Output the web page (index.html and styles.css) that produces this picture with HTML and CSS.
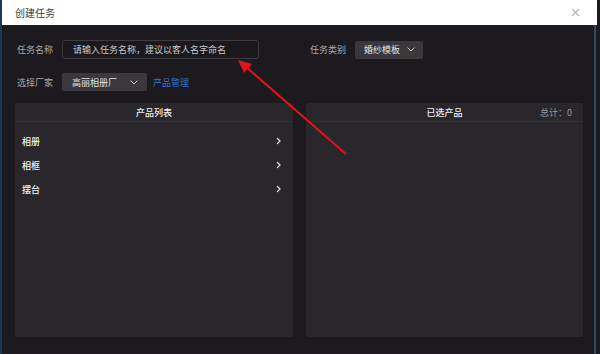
FILE: index.html
```html
<!DOCTYPE html>
<html lang="zh">
<head>
<meta charset="utf-8">
<title>创建任务</title>
<link rel="stylesheet" href="styles.css">
</head>
<body>
<div class="window">
  <div class="titlebar">
    <span class="title">创建任务</span>
    <svg class="close" width="9" height="9" viewBox="0 0 9 9"><path d="M1 1L8 8M8 1L1 8" stroke="#b4b4b4" stroke-width="1.1" fill="none"/></svg>
  </div>
  <div class="content">
    <div class="row">
      <span class="label">任务名称</span>
      <div class="input">请输入任务名称，建议以客人名字命名</div>
      <span class="label label-cat">任务类别</span>
      <div class="select select-cat">婚纱模板<svg class="caret" width="8" height="5" viewBox="0 0 8 5"><path d="M0.5 0.5L4 4L7.5 0.5" stroke="#c8c8c8" stroke-width="1" fill="none"/></svg></div>
    </div>
    <div class="row row2">
      <span class="label">选择厂家</span>
      <div class="select select-fac">高丽相册厂<svg class="caret" width="8" height="5" viewBox="0 0 8 5"><path d="M0.5 0.5L4 4L7.5 0.5" stroke="#c8c8c8" stroke-width="1" fill="none"/></svg></div>
      <a class="link">产品管理</a>
    </div>
    <div class="panels">
      <div class="panel panel-left">
        <div class="panel-head">产品列表</div>
        <ul class="list">
          <li class="item"><span>相册</span><svg width="5" height="8" viewBox="0 0 5 8"><path d="M1 1L4 4L1 7" stroke="#e0e0e0" stroke-width="1.2" fill="none"/></svg></li>
          <li class="item"><span>相框</span><svg width="5" height="8" viewBox="0 0 5 8"><path d="M1 1L4 4L1 7" stroke="#e0e0e0" stroke-width="1.2" fill="none"/></svg></li>
          <li class="item"><span>摆台</span><svg width="5" height="8" viewBox="0 0 5 8"><path d="M1 1L4 4L1 7" stroke="#e0e0e0" stroke-width="1.2" fill="none"/></svg></li>
        </ul>
      </div>
      <div class="panel panel-right">
        <div class="panel-head">已选产品<span class="total">总计：0</span></div>
      </div>
    </div>
  </div>
  <svg class="arrow" width="600" height="354" viewBox="0 0 600 354">
    <line x1="346" y1="154" x2="245" y2="66" stroke="#e3131b" stroke-width="2"/>
    <polygon points="238,60 252,64 244,73" fill="#e3131b"/>
  </svg>
</div>
</body>
</html>
```
FILE: styles.css
```css
* { box-sizing: border-box; }
html, body { margin: 0; padding: 0; }
body {
  width: 600px;
  height: 354px;
  overflow: hidden;
  background: #1b191d;
  font-family: "Noto Sans CJK SC", "Noto Sans", sans-serif;
}
.window {
  position: relative;
  width: 600px;
  height: 354px;
  background: #1c1a1e;
  border-left: 2px solid #1f3550;
  display: flex;
  flex-direction: column;
}
.window::after {
  content: "";
  position: absolute;
  right: 4px;
  top: 25px;
  bottom: 0;
  width: 2px;
  background: #2a4a6c;
}
.titlebar {
  height: 25px;
  background: #ffffff;
  margin-right: 3px;
  display: flex;
  align-items: center;
  justify-content: space-between;
  padding: 0 17px 0 13px;
  font-size: 10px;
  color: #3a3a3a;
}
.content {
  padding: 15px 17px 0 13px;
  display: flex;
  flex-direction: column;
}
.row {
  display: flex;
  align-items: center;
  height: 19px;
  padding-left: 2px;
}
.row2 { margin-top: 14px; height: 18px; }
.label {
  font-size: 9px;
  color: #a9a9ab;
  margin-right: 9px;
  white-space: nowrap;
}
.label-cat { margin-left: 51px; }
.input {
  width: 197px;
  height: 19px;
  border: 1px solid #3d3b40;
  border-radius: 3px;
  background: #1a181c;
  color: #c9c9cb;
  font-size: 9px;
  display: flex;
  align-items: center;
  padding-left: 10px;
  white-space: nowrap;
}
.select {
  height: 18px;
  background: #3a383d;
  border-radius: 2px;
  color: #e2e2e2;
  font-size: 9px;
  display: flex;
  align-items: center;
  padding-left: 10px;
  white-space: nowrap;
}
.select-cat { width: 68px; padding-left: 9px; }
.select-cat .caret { margin-left: 7px; }
.select-fac { width: 85px; }
.select-fac .caret { margin-left: 13px; }
.link {
  margin-left: 6px;
  font-size: 9px;
  color: #2f72d6;
}
.panels {
  display: flex;
  gap: 13px;
  margin-top: 12px;
  height: 234px;
}
.panel {
  background: #29272b;
  border-radius: 2px;
  display: flex;
  flex-direction: column;
}
.panel-left { width: 278px; }
.panel-right { width: 277px; }
.panel-head {
  position: relative;
  height: 19px;
  border-bottom: 1px solid #343236;
  display: flex;
  align-items: center;
  justify-content: center;
  font-size: 9px;
  font-weight: 500;
  color: #f0f0f0;
}
.total {
  position: absolute;
  right: 11px;
  top: 0;
  height: 18px;
  display: flex;
  align-items: center;
  font-weight: 400;
  color: #9a9a9c;
}
.list {
  list-style: none;
  margin: 0;
  padding: 7px 0 0 0;
}
.item {
  height: 24px;
  display: flex;
  align-items: center;
  justify-content: space-between;
  padding: 0 12px 0 7px;
  font-size: 9px;
  font-weight: 500;
  color: #f2f2f2;
}
.arrow {
  position: absolute;
  left: -2px;
  top: 0;
  pointer-events: none;
}
```
